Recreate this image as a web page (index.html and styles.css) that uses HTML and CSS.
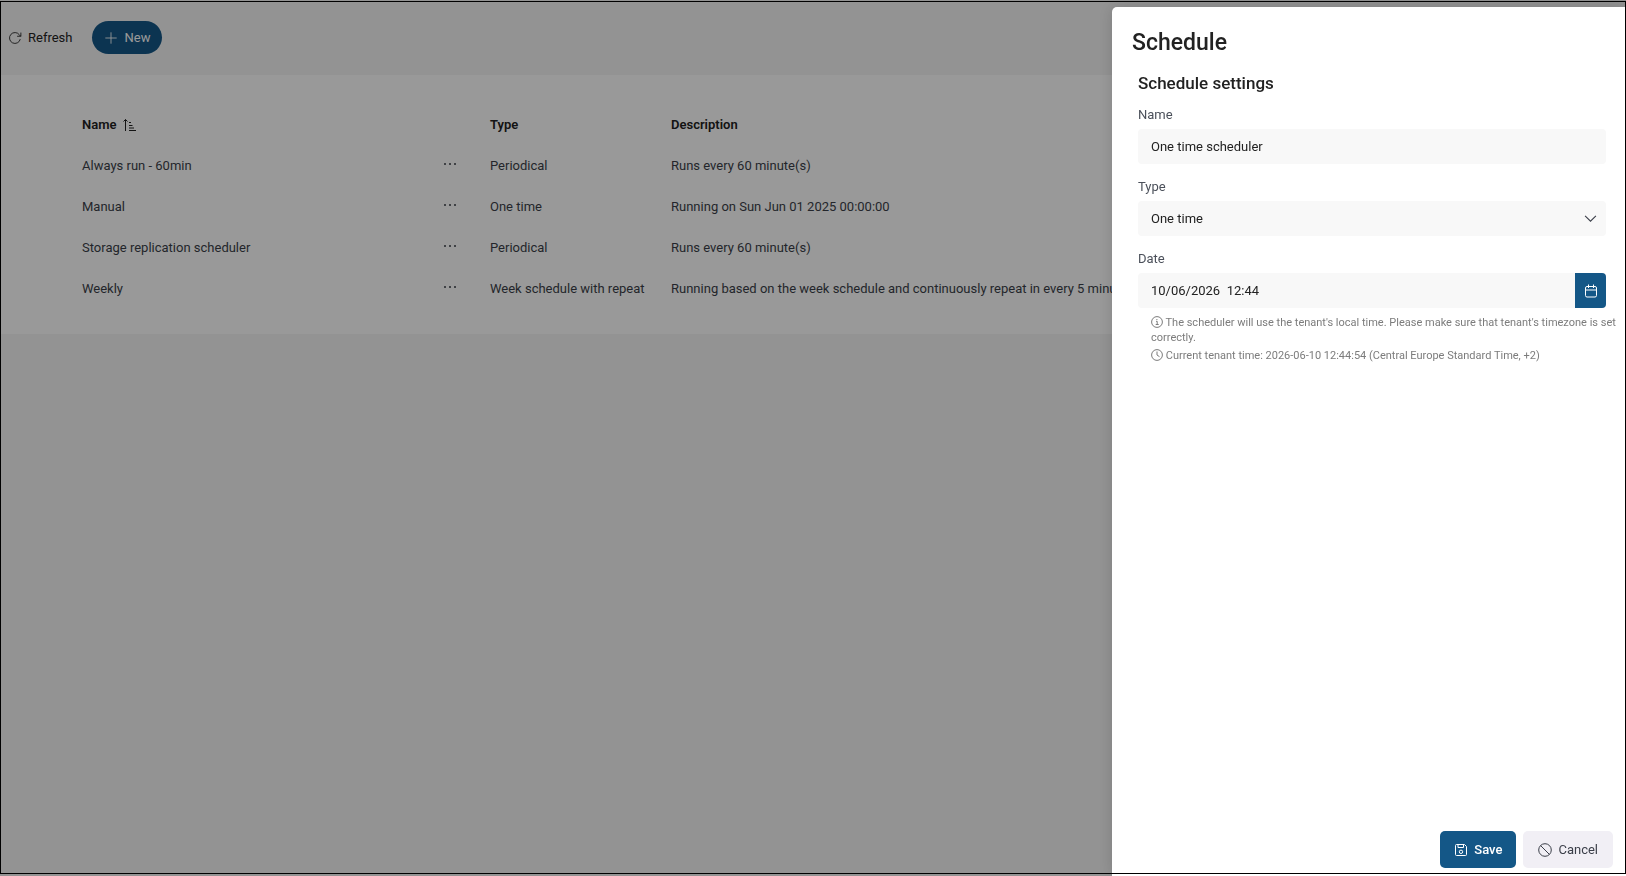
FILE: index.html
```html
<!DOCTYPE html>
<html lang="en">
<head>
  <meta charset="UTF-8" />
  <meta name="viewport" content="width=device-width, initial-scale=1.0">
  <title>Schedules</title>
  <link rel="stylesheet" href="styles.css">
</head>
<body>
  <main class="page">
    <div class="toolbar">
      <button type="button" class="btn-link">
        <svg class="icon" viewBox="0 0 16 16"><path d="M14 9.3A6.2 6.2 0 1 1 13 4.4L14.5 6M14.7 1.8V6h-4.3" /></svg>
        Refresh
      </button>
      <button type="button" class="btn-new">
        <svg class="icon" viewBox="0 0 16 16"><path d="M8 1.5v13M1.5 8h13" /></svg>
        New
      </button>
    </div>

    <section class="panel">
      <table class="schedules">
        <colgroup>
          <col class="col-name">
          <col class="col-menu">
          <col class="col-type">
          <col>
        </colgroup>
        <thead>
          <tr>
            <th>
              <span class="sorted">Name
                <svg class="icon" viewBox="0 0 14 14"><path d="M3.5 13V1.5M1.5 3.5l2-2 2 2M7 4.5h2M7 7.5h3.500M7 10h5M7 12.500h7" /></svg>
              </span>
            </th>
            <th></th>
            <th>Type</th>
            <th>Description</th>
          </tr>
        </thead>
        <tbody>
          <tr>
            <td>Always run - 60min</td>
            <td><button type="button" class="row-menu" aria-label="More"><i></i><i></i><i></i></button></td>
            <td>Periodical</td>
            <td>Runs every 60 minute(s)</td>
          </tr>
          <tr>
            <td>Manual</td>
            <td><button type="button" class="row-menu" aria-label="More"><i></i><i></i><i></i></button></td>
            <td>One time</td>
            <td>Running on Sun Jun 01 2025 00:00:00</td>
          </tr>
          <tr>
            <td>Storage replication scheduler</td>
            <td><button type="button" class="row-menu" aria-label="More"><i></i><i></i><i></i></button></td>
            <td>Periodical</td>
            <td>Runs every 60 minute(s)</td>
          </tr>
          <tr>
            <td>Weekly</td>
            <td><button type="button" class="row-menu" aria-label="More"><i></i><i></i><i></i></button></td>
            <td>Week schedule with repeat</td>
            <td>Running based on the week schedule and continuously repeat in every 5 minute(s)</td>
          </tr>
        </tbody>
      </table>
    </section>
  </main>

  <div class="overlay"></div>

  <aside class="drawer">
    <h1>Schedule</h1>
    <form class="settings">
      <h2>Schedule settings</h2>

      <div class="field">
        <label for="name">Name</label>
        <input type="text" id="name" value="One time scheduler">
      </div>

      <div class="field">
        <label for="type">Type</label>
        <div class="select">
          <select id="type">
            <option>Periodical</option>
            <option selected>One time</option>
            <option>Week schedule with repeat</option>
          </select>
          <svg class="icon chevron" viewBox="0 0 12 12"><path d="M1 3.5l5 5 5-5" /></svg>
        </div>
      </div>

      <div class="field">
        <label for="date">Date</label>
        <div class="date">
          <input type="text" id="date" value="10/06/2026  12:44">
          <button type="button" aria-label="Pick a date">
            <svg class="icon" viewBox="0 0 14 14"><path d="M3 2.500h8a1.500 1.500 0 0 1 1.500 1.500v7.500a1.500 1.500 0 0 1-1.500 1.500H3a1.500 1.500 0 0 1-1.500-1.500V4A1.500 1.500 0 0 1 3 2.500zM1.500 6h11M4.500 .5v3.500M9.500 .5v3.500" /></svg>
          </button>
        </div>
      </div>

      <div class="help">
        <p>
          <svg class="icon" viewBox="0 0 12 12"><circle cx="6" cy="6" r="5.400" /><path d="M5 5.300h1.200v3.200M4.700 8.500h3M5.900 3v1" /></svg>
          The scheduler will use the tenant's local time. Please make sure that tenant's timezone is set correctly.
        </p>
        <p>
          <svg class="icon" viewBox="0 0 12 12"><circle cx="6" cy="6" r="5.400" /><path d="M6 2.500V6l2.500 1.700" /></svg>
          Current tenant time: 2026-06-10 12:44:54 (Central Europe Standard Time, +2)
        </p>
      </div>
    </form>

    <footer class="actions">
      <button type="button" class="btn-save">
        <svg class="icon" viewBox="0 0 14 14"><path d="M2.500 1.500h8l2 2v8a1 1 0 0 1-1 1h-9a1 1 0 0 1-1-1v-9a1 1 0 0 1 1-1zM4 1.500v3h5.500v-3" /><circle cx="7" cy="8.800" r="1.700" /></svg>
        Save
      </button>
      <button type="button" class="btn-cancel">
        <svg class="icon" viewBox="0 0 14 14"><circle cx="7" cy="7" r="6.300" /><path d="M2.600 2.600l8.800 8.800" /></svg>
        Cancel
      </button>
    </footer>
  </aside>

  <div class="frame"></div>
</body>
</html>
```
FILE: styles.css
```css
* {
  box-sizing: border-box;
}
body {
  margin: 0;
  background: #f5f5f5;
  color: #3b3f49;
  font-family: Roboto, "Open Sans", sans-serif;
  font-size: 13px;
  line-height: 20px;
  overflow: hidden;
}
button, input, select {
  font: inherit;
  color: inherit;
  border: none;
  margin: 0;
}
button {
  cursor: pointer;
}
h1, h2, p {
  margin: 0;
}
.icon {
  width: 14px;
  height: 14px;
  fill: none;
  stroke: currentColor;
  stroke-width: 1;
  flex: none;
}

/* list page */
.toolbar {
  display: flex;
  align-items: center;
  gap: 12px;
  height: 75px;
}
.btn-link, .btn-new {
  display: flex;
  align-items: center;
  gap: 6px;
  height: 33px;
  padding: 0 8px;
  background: none;
  color: #222;
}
.btn-new {
  padding: 0 12px;
  border-radius: 17px;
  background: #145787;
  color: #fff;
}
.panel {
  padding: 29px 0 25px 82px;
  background: #fff;
  overflow: hidden;
}
.schedules {
  width: 100%;
  table-layout: fixed;
  border-collapse: collapse;
}
.schedules th, .schedules td {
  height: 41px;
  padding: 0;
  text-align: left;
  white-space: nowrap;
}
.schedules th {
  color: #222;
  font-weight: 600;
}
.col-name {
  width: 362px;
}
.col-menu {
  width: 46px;
}
.col-type {
  width: 181px;
}
.sorted {
  display: flex;
  align-items: center;
  gap: 6px;
}
.row-menu {
  display: flex;
  gap: 3px;
  padding: 3px 0 6px;
  background: none;
}
.row-menu i {
  width: 2px;
  height: 2px;
  background: #6b6e76;
}

.overlay {
  position: fixed;
  inset: 0;
  background: rgba(0, 0, 0, 0.4);
}

/* drawer */
.drawer {
  position: fixed;
  top: 7px;
  right: 0;
  bottom: 0;
  display: flex;
  flex-direction: column;
  width: 514px;
  padding: 20px 13px 8px 20px;
  border-radius: 5px 0 0 0;
  background: #fff;
  box-shadow: 0 0 16px rgba(0, 0, 0, 0.15);
}
.drawer h1 {
  color: #222;
  font-size: 23px;
  font-weight: 500;
  line-height: 32px;
}
.settings {
  flex: 1;
  padding: 12px 7px 0 6px;
}
.settings h2 {
  margin-bottom: 10px;
  color: #222;
  font-size: 17px;
  font-weight: 500;
  line-height: 24px;
}
.field {
  margin-bottom: 13px;
}
.field label {
  display: block;
  margin-bottom: 4px;
  color: #4b505a;
}
.field input, .field select {
  display: block;
  width: 100%;
  height: 35px;
  padding: 0 13px;
  border-radius: 4px;
  background: #f8f8f8;
  color: #222;
}
.field select {
  appearance: none;
}
.select {
  position: relative;
}
.chevron {
  position: absolute;
  top: 11px;
  right: 9px;
  width: 13px;
  height: 13px;
  pointer-events: none;
}
.date {
  display: flex;
}
.date input {
  flex: 1;
  border-radius: 4px 0 0 4px;
}
.date button {
  display: flex;
  align-items: center;
  justify-content: center;
  width: 31px;
  padding: 0;
  border-radius: 0 4px 4px 0;
  background: #145787;
  color: #fff;
}
.help {
  margin: -6px -14px 0 0;
  padding-left: 13px;
  color: #7c7c7c;
  font-size: 11px;
  line-height: 15px;
}
.help p {
  margin-bottom: 3px;
}
.help .icon {
  width: 12px;
  height: 12px;
  vertical-align: -2px;
}
.actions {
  display: flex;
  justify-content: flex-end;
  gap: 7px;
}
.actions button {
  display: flex;
  align-items: center;
  gap: 6px;
  height: 37px;
  padding: 0 15px;
  border-radius: 5px;
}
.actions .btn-save {
  padding: 0 14px;
  background: #145787;
  color: #fff;
  font-weight: 500;
}
.btn-cancel {
  background: #f1eff5;
  color: #3b3f49;
}

/* thin outline round the whole window */
.frame {
  position: fixed;
  inset: 1px 0 2px;
  border: 1px solid #000;
  pointer-events: none;
}
```
